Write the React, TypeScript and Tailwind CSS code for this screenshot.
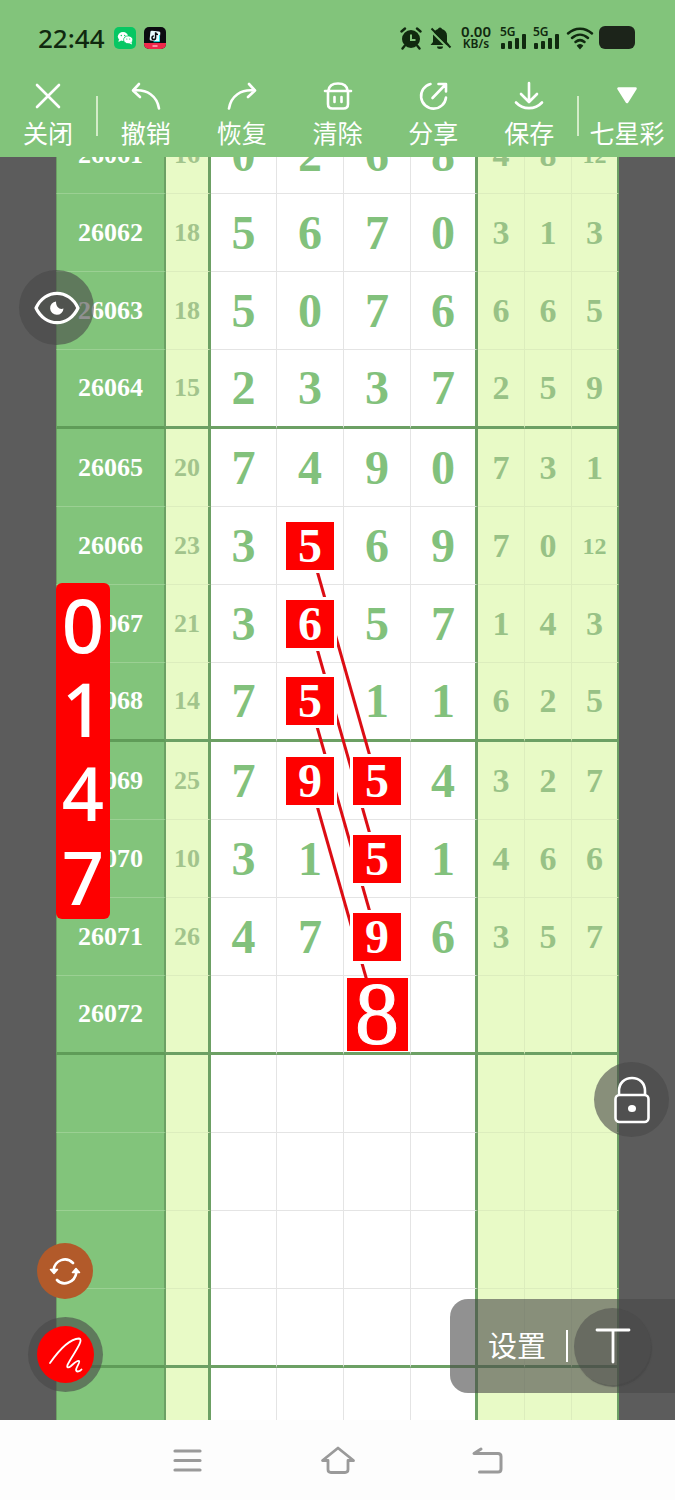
import type { ReactNode } from 'react';
import clsx from 'clsx';

interface Draw {
  issue: string;
  sum: string;
  main: string[];
  extra: string[];
  marked?: number[];
}

const draws: Draw[] = [
  { issue: '26061', sum: '16', main: ['0', '2', '6', '8'], extra: ['4', '8', '12'] },
  { issue: '26062', sum: '18', main: ['5', '6', '7', '0'], extra: ['3', '1', '3'] },
  { issue: '26063', sum: '18', main: ['5', '0', '7', '6'], extra: ['6', '6', '5'] },
  { issue: '26064', sum: '15', main: ['2', '3', '3', '7'], extra: ['2', '5', '9'] },
  { issue: '26065', sum: '20', main: ['7', '4', '9', '0'], extra: ['7', '3', '1'] },
  { issue: '26066', sum: '23', main: ['3', '5', '6', '9'], extra: ['7', '0', '12'], marked: [1] },
  { issue: '26067', sum: '21', main: ['3', '6', '5', '7'], extra: ['1', '4', '3'], marked: [1] },
  { issue: '26068', sum: '14', main: ['7', '5', '1', '1'], extra: ['6', '2', '5'], marked: [1] },
  { issue: '26069', sum: '25', main: ['7', '9', '5', '4'], extra: ['3', '2', '7'], marked: [1, 2] },
  { issue: '26070', sum: '10', main: ['3', '1', '5', '1'], extra: ['4', '6', '6'], marked: [2] },
  { issue: '26071', sum: '26', main: ['4', '7', '9', '6'], extra: ['3', '5', '7'], marked: [2] },
  { issue: '26072', sum: '', main: ['', '', '8', ''], extra: ['', '', ''], marked: [2] },
  ...Array.from({ length: 5 }, () => ({
    issue: '',
    sum: '',
    main: ['', '', '', ''],
    extra: ['', '', ''],
  })),
];

const PREDICTED = '26072';

// each line joins a mark in the second column to the one three rows below in the third
const lineStarts = [430, 508, 586, 665];

const Stroke = ({ children, className }: { children: ReactNode; className?: string }) => (
  <svg
    viewBox="0 0 32 32"
    className={clsx('size-8', className)}
    fill="none"
    stroke="currentColor"
    strokeWidth="2.6"
    strokeLinecap="round"
    strokeLinejoin="round"
    aria-hidden="true"
  >
    {children}
  </svg>
);

const Signal = () => (
  <div className="relative h-6 w-7">
    <span className="absolute top-0 left-0 text-[12px] leading-[11px] font-semibold">5G</span>
    <svg viewBox="0 0 28 24" className="h-6 w-7" fill="currentColor" aria-hidden="true">
      <rect x="1" y="17" width="4" height="6" rx="1" />
      <rect x="8" y="15" width="4" height="8" rx="1" />
      <rect x="15" y="12" width="4" height="11" rx="1" />
      <rect x="22" y="8" width="4" height="15" rx="1" />
    </svg>
  </div>
);

const StatusBar = () => (
  <div className="flex h-[75px] items-center justify-between pr-10 pl-[38px] text-[#10290f]">
    <div className="flex items-center gap-2">
      <span className="text-[26px] leading-8 font-medium">22:44</span>
      <svg viewBox="0 0 22 22" className="ml-px size-[22px]" aria-hidden="true">
        <rect width="22" height="22" rx="5" fill="#07c763" />
        <ellipse cx="9" cy="9.5" rx="5.2" ry="4.4" fill="#fff" />
        <path d="M5 12l-.6 3 3-1.4z" fill="#fff" />
        <ellipse cx="14.2" cy="12.8" rx="4.6" ry="3.9" fill="#fff" stroke="#07c763" strokeWidth=".8" />
        <path d="M17.5 15l.5 2.4-2.8-1.2z" fill="#fff" />
        <g fill="#07c763">
          <circle cx="7.3" cy="8.5" r=".7" />
          <circle cx="10.7" cy="8.5" r=".7" />
          <circle cx="12.8" cy="12" r=".6" />
          <circle cx="15.7" cy="12" r=".6" />
        </g>
      </svg>
      <svg viewBox="0 0 22 22" className="size-[22px]" aria-hidden="true">
        <defs>
          <clipPath id="app-tile">
            <rect width="22" height="22" rx="5" />
          </clipPath>
        </defs>
        <g clipPath="url(#app-tile)">
          <rect width="22" height="22" fill="#0b0b10" />
          <rect y="16" width="22" height="6" fill="#f0284a" />
          <rect x="6" y="4" width="10" height="10" rx="1.5" fill="#e9fbff" transform="rotate(6 11 9)" />
          <path d="M15.5 8v6.5l-6 .2" fill="none" stroke="#25e8e8" strokeWidth="1" />
          <path d="M11.6 5.2v5.6a1.8 1.8 0 1 1-1.8-1.8M11.6 5.4c.3 1.4 1.2 2.1 2.4 2.2" fill="none" stroke="#0b0b10" strokeWidth="1.5" />
          <path d="M8.5 19h5" stroke="#ffb3c0" strokeWidth="1.4" />
        </g>
      </svg>
    </div>

    <div className="flex items-center gap-[5px]">
      <svg viewBox="0 0 24 24" className="size-6" aria-hidden="true">
        <circle cx="12" cy="13" r="9" fill="currentColor" />
        <path d="M2.5 5.5L6 2.5M21.5 5.5L18 2.5M5.5 20L3.5 22.5M18.5 20l2 2.5" stroke="currentColor" strokeWidth="2.4" strokeLinecap="round" />
        <path d="M12 8.5V14h4.5" fill="none" stroke="#82c47b" strokeWidth="2" />
      </svg>
      <svg viewBox="0 0 24 24" className="size-6" aria-hidden="true">
        <path d="M12 1.5a2 2 0 0 1 2 1.6c3 .8 5 3.4 5 6.7V16l2.5 3H2.5L5 16V9.8c0-3.3 2-5.9 5-6.7a2 2 0 0 1 2-1.6z" fill="currentColor" />
        <path d="M9 20.5h6a3 2.5 0 0 1-6 0z" fill="currentColor" />
        <path d="M1.5 3.5l19 19" stroke="#82c47b" strokeWidth="2.2" />
        <path d="M3.5 2.5l19 19" stroke="currentColor" strokeWidth="2" />
      </svg>
      <div className="mx-1 text-center font-semibold">
        <div className="text-[15px] leading-[13px]">0.00</div>
        <div className="text-[12px] leading-[12px]">KB/s</div>
      </div>
      <Signal />
      <Signal />
      <svg viewBox="0 0 28 24" className="h-6 w-7" fill="none" stroke="currentColor" strokeWidth="2.5" strokeLinecap="round" aria-hidden="true">
        <path d="M2 7.5c7-6.5 17-6.5 24 0M6 12c5-4.5 11-4.5 16 0M9.5 16c3-2.5 6-2.5 9 0" />
        <path d="M12.5 19.8c1-.8 2-.8 3 0L14 21.5z" fill="currentColor" />
      </svg>
      <div className="h-[23px] w-9 rounded-md bg-[#1c241a]" />
    </div>
  </div>
);

const ToolButton = ({ label, children }: { label: string; children: ReactNode }) => (
  <button type="button" className="flex flex-1 basis-0 flex-col items-center gap-0.5 text-white">
    {children}
    <span className="text-[25px] leading-10 whitespace-nowrap">{label}</span>
  </button>
);

const Toolbar = () => (
  <div className="flex h-[82px] items-center">
    <ToolButton label="关闭">
      <Stroke>
        <path d="M5 6l22 22M27 6L5 28" />
      </Stroke>
    </ToolButton>
    <div className="h-10 w-0.5 bg-[#d3ecc8]" />
    <ToolButton label="撤销">
      <Stroke>
        <path d="M9 5L3 11.5l7 6.5M3.5 11.5C17 10 27 17 29 29.5" />
      </Stroke>
    </ToolButton>
    <ToolButton label="恢复">
      <Stroke>
        <path d="M23 5l6 6.5-7 6.5M28.5 11.5C15 10 5 17 3 29.5" />
      </Stroke>
    </ToolButton>
    <ToolButton label="清除">
      <Stroke>
        <path d="M3 12h26M6.5 11.5c.5-4.5 4-7 9.5-7s9 2.5 9.500 7M6 12v13c0 3 1.500 4.500 4.500 4.500h11c3 0 4.500-1.500 4.500-4.500V12M12.500 18v5M19.500 18v5" />
      </Stroke>
    </ToolButton>
    <ToolButton label="分享">
      <Stroke>
        <path d="M13.5 5A12.5 12.5 0 1 0 29 18.5M15.5 19L28.5 5.5M21.5 5H29v7.5" />
      </Stroke>
    </ToolButton>
    <ToolButton label="保存">
      <Stroke>
        <path d="M16 4v18M8 15l8 8 8-8M3 23.5c7 7.5 19 7.5 26 0" />
      </Stroke>
    </ToolButton>
    <div className="h-10 w-0.5 bg-[#d3ecc8]" />
    <ToolButton label="七星彩">
      <Stroke>
        <path d="M7.5 9.5h17L16 23z" fill="currentColor" />
      </Stroke>
    </ToolButton>
  </div>
);

const MainNumber = ({ draw, index }: { draw: Draw; index: number }) => {
  const value = draw.main[index];
  if (!draw.marked?.includes(index)) return <>{value}</>;

  if (draw.issue === PREDICTED) {
    return (
      <span className="relative z-10 mx-auto flex h-[73px] w-[61px] items-center justify-center bg-[#fe0000] text-[88px] leading-none font-normal text-white [-webkit-text-stroke:1px_white]">
        {value}
      </span>
    );
  }

  return (
    <span className="relative z-10 mx-auto flex size-12 items-center justify-center bg-[#fe0000] text-white ring-3 ring-white">
      {value}
    </span>
  );
};

const TrendTable = () => (
  <div className="relative mx-14 -mt-[41px] font-['Liberation_Serif',serif] font-bold">
    <table className="w-full table-fixed border-separate border-spacing-0 text-center leading-none">
      <colgroup>
        <col className="w-[110px]" />
        <col className="w-[45px]" />
        <col className="w-[66px]" />
        <col className="w-[67px]" />
        <col className="w-[67px]" />
        <col className="w-[67px]" />
        <col />
        <col />
        <col />
      </colgroup>
      <tbody>
        {draws.map((draw, i) => {
          const groupEnd = i % 4 === 3;
          return (
            <tr key={i} className={groupEnd ? 'h-[79px]' : 'h-[78px]'}>
              <th
                scope="row"
                className={clsx(
                  'border-r-2 border-l border-r-[#6ca064] border-l-[#6ca064] bg-[#82c47b] p-0 text-[26px] text-white',
                  groupEnd ? 'border-b-3 border-b-[#5f9c58]' : 'border-b border-b-[#9bd093]',
                )}
              >
                {draw.issue}
              </th>
              <td
                className={clsx(
                  'border-r-3 border-r-[#6ca064] bg-[#e8fac6] p-0 text-[26px] text-[#a2c48c]',
                  groupEnd ? 'border-b-3 border-b-[#6ca064]' : 'border-b border-b-[#dcedbd]',
                )}
              >
                {draw.sum}
              </td>
              {draw.main.map((_, n) => (
                <td
                  key={n}
                  className={clsx(
                    'bg-white p-0 text-[48px] text-[#82c17c]',
                    n === 3 ? 'border-r-3 border-r-[#6ca064]' : 'border-r border-r-[#e4e4e4]',
                    groupEnd ? 'border-b-3 border-b-[#6ca064]' : 'border-b border-b-[#e4e4e4]',
                  )}
                >
                  <MainNumber draw={draw} index={n} />
                </td>
              ))}
              {draw.extra.map((value, n) => (
                <td
                  key={n}
                  className={clsx(
                    'bg-[#e8fac6] p-0 text-[#98c286]',
                    value.length > 1 ? 'text-[24px]' : 'text-[34px]',
                    n === 2 ? 'border-r-2 border-r-[#6ca064]' : 'border-r border-r-[#dcedbd]',
                    groupEnd ? 'border-b-3 border-b-[#6ca064]' : 'border-b border-b-[#dcedbd]',
                  )}
                >
                  {value}
                </td>
              ))}
            </tr>
          );
        })}
      </tbody>
    </table>

    <svg
      viewBox="0 0 563 1330"
      preserveAspectRatio="none"
      className="pointer-events-none absolute inset-0 h-full w-full"
      stroke="#dc0d14"
      strokeWidth="3"
      aria-hidden="true"
    >
      {lineStarts.map((y) => (
        <line key={y} x1="254" y1={y} x2="321" y2={y + 235} />
      ))}
    </svg>
  </div>
);

const Note = () => (
  <div className="absolute top-[426px] left-14 z-20 w-[54px] rounded-md bg-[#fe0000] text-[74px] leading-[84px] font-medium text-white">
    {['0', '1', '4', '7'].map((digit) => (
      <div key={digit} className="flex justify-center">
        {digit}
      </div>
    ))}
  </div>
);

const FloatingControls = () => (
  <>
    <button
      type="button"
      aria-label="显示"
      className="absolute top-[113px] left-[19px] z-20 flex size-[75px] items-center justify-center rounded-full bg-[#484848]/60 text-white"
    >
      <svg viewBox="0 0 46 34" className="h-[34px] w-[46px]" aria-hidden="true">
        <path d="M2 17C11-2.5 35-2.5 44 17 35 36.5 11 36.5 2 17z" fill="#50534f" stroke="currentColor" strokeWidth="3.2" strokeLinejoin="round" />
        <path d="M22 10.5a6.7 6.7 0 1 0 7.5 7c-3.5 1.5-7.5-1-7.5-7z" fill="currentColor" />
      </svg>
    </button>

    <button
      type="button"
      aria-label="锁定"
      className="absolute top-[905px] right-1.5 z-20 flex size-[75px] items-center justify-center rounded-full bg-[#484848]/60 text-white"
    >
      <svg viewBox="0 0 36 48" className="h-12 w-9" fill="none" stroke="currentColor" strokeWidth="2.6" aria-hidden="true">
        <path d="M5 19v-4C5 7 10.5 2 18 2s13 5 13 13v4" fill="#505050" />
        <rect x="1.5" y="19" width="33" height="27" rx="4" fill="#505050" />
        <ellipse cx="18" cy="32.5" rx="4" ry="3.6" fill="currentColor" stroke="none" />
      </svg>
    </button>

    <button
      type="button"
      aria-label="刷新"
      className="absolute bottom-[121px] left-[37px] z-20 flex size-14 items-center justify-center rounded-full bg-[#b25a2a] text-white"
    >
      <Stroke>
        <path d="M24 8C17 1 6 5 4.5 15M8 25C14 31.5 26 28 27.5 17" />
        <path d="M1.5 14.5h7l-3.5 4zM23.5 17.5h7l-3.5-4z" fill="currentColor" strokeWidth="1.5" />
      </Stroke>
    </button>

    <button
      type="button"
      aria-label="画笔"
      className="absolute bottom-7 left-7 z-20 flex size-[75px] items-center justify-center rounded-full bg-[#484848]/60"
    >
      <span className="flex size-[57px] items-center justify-center rounded-full bg-[#fe0000] text-white">
        <svg viewBox="0 0 36 36" className="size-9" fill="none" stroke="currentColor" strokeWidth="1.8" strokeLinecap="round" strokeLinejoin="round" aria-hidden="true">
          <path d="M2 26C9 16 20 2 31 1.5c6 1-7 17-11.5 26.5-1 3 1 3 3.500 1 3-2.500 6-6 8-5 1.500 1.500-3 6-3 9 .5 2.500 4 1.500 5.500-.5" />
        </svg>
      </span>
    </button>

    <div className="absolute right-0 bottom-[27px] z-20 flex h-[94px] w-[225px] items-center rounded-l-[18px] bg-[#484848]/60 pr-6 pl-[38px] text-white">
      <button type="button" className="text-[29px] leading-10 whitespace-nowrap">
        设置
      </button>
      <div className="ml-5 h-8 w-0.5 bg-white" />
      <button
        type="button"
        aria-label="文字"
        className="ml-auto flex size-[77px] items-center justify-center rounded-full bg-[#484848]/50 shadow-[1px_2px_1px_#44444499]"
      >
        <svg viewBox="0 0 36 36" className="size-9" fill="none" stroke="currentColor" strokeWidth="2.8" strokeLinecap="round" aria-hidden="true">
          <path d="M2 2h32M18 2v32" />
        </svg>
      </button>
    </div>
  </>
);

const SystemNav = () => (
  <nav className="flex h-20 items-center justify-center gap-[114px] bg-[#fdfdfd] text-[#9a9a9a]">
    <button type="button" aria-label="最近任务">
      <svg viewBox="0 0 36 36" className="size-9" fill="none" stroke="currentColor" strokeWidth="3.2" strokeLinecap="round" aria-hidden="true">
        <path d="M5 9h25M5 18.5h25M5 28h25" />
      </svg>
    </button>
    <button type="button" aria-label="主页">
      <svg viewBox="0 0 36 36" className="size-9" fill="none" stroke="currentColor" strokeWidth="2.8" strokeLinecap="round" strokeLinejoin="round" aria-hidden="true">
        <path d="M8 18.5H2.5L18 6l15.5 12.5H28v9c0 2-1 3-3 3H11c-2 0-3-1-3-3z" />
      </svg>
    </button>
    <button type="button" aria-label="返回">
      <svg viewBox="0 0 36 36" className="size-9" fill="none" stroke="currentColor" strokeWidth="3" strokeLinecap="round" strokeLinejoin="round" aria-hidden="true">
        <path d="M11 7L4 11.5h24c2 0 3 1 3 3V27c0 2-1 3-3 3H9.5" />
      </svg>
    </button>
  </nav>
);

export default function App() {
  return (
    <div className="flex h-screen flex-col bg-[#5c5c5c] font-['Noto_Sans','Noto_Sans_CJK_SC',sans-serif]">
      <header className="bg-[#82c47b]">
        <StatusBar />
        <Toolbar />
      </header>
      <main className="relative isolate min-h-0 flex-1 overflow-hidden">
        <TrendTable />
        <Note />
        <FloatingControls />
      </main>
      <SystemNav />
    </div>
  );
}
